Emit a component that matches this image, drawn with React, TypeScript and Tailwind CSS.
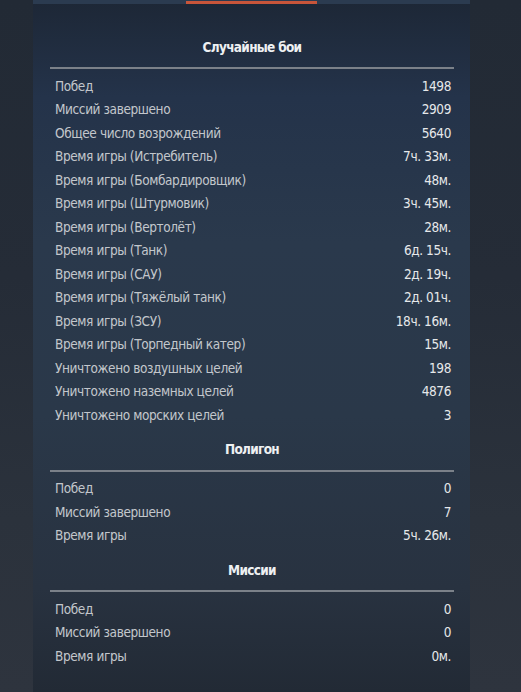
import React from "react";

type Row = [string, string];

const sections: { title: string; rows: Row[] }[] = [
  {
    title: "Случайные бои",
    rows: [
      ["Побед", "1498"],
      ["Миссий завершено", "2909"],
      ["Общее число возрождений", "5640"],
      ["Время игры (Истребитель)", "7ч. 33м."],
      ["Время игры (Бомбардировщик)", "48м."],
      ["Время игры (Штурмовик)", "3ч. 45м."],
      ["Время игры (Вертолёт)", "28м."],
      ["Время игры (Танк)", "6д. 15ч."],
      ["Время игры (САУ)", "2д. 19ч."],
      ["Время игры (Тяжёлый танк)", "2д. 01ч."],
      ["Время игры (ЗСУ)", "18ч. 16м."],
      ["Время игры (Торпедный катер)", "15м."],
      ["Уничтожено воздушных целей", "198"],
      ["Уничтожено наземных целей", "4876"],
      ["Уничтожено морских целей", "3"],
    ],
  },
  {
    title: "Полигон",
    rows: [
      ["Побед", "0"],
      ["Миссий завершено", "7"],
      ["Время игры", "5ч. 26м."],
    ],
  },
  {
    title: "Миссии",
    rows: [
      ["Побед", "0"],
      ["Миссий завершено", "0"],
      ["Время игры", "0м."],
    ],
  },
];

export default function App() {
  return (
    <div className="w-[521px] h-[692px] overflow-hidden flex bg-[linear-gradient(180deg,#222a35_0%,#252c37_40%,#2b323c_75%,#2e343e_100%)] font-['DejaVu_Sans_Condensed','DejaVu_Sans',sans-serif]">
      <div className="ml-[33px] w-[437px] h-full flex flex-col bg-[linear-gradient(180deg,#1d2736_0%,#24334a_14%,#2a394c_35%,#2a3849_60%,#283240_85%,#222a35_100%)]">
        <div className="h-[4px] flex bg-[#2b3b50]">
          <div className="ml-[153px] w-[131px] h-[3px] mt-[1px] bg-[#c8553a]" />
        </div>
        <div className="pl-[17px] pr-[16px] pt-[31px] flex flex-col">
          {sections.map((s, i) => (
            <div key={s.title} className={i > 0 ? "mt-[11px]" : ""}>
              <div className="h-[24px] flex items-center justify-center text-[13.5px] font-bold tracking-[-0.7px] text-[#eef0f2]">
                {s.title}
              </div>
              <div className="mt-[8px] h-[2px] bg-[#7b8189]" />
              <div className="mt-[5px] flex flex-col">
                {s.rows.map(([k, v], j) => (
                  <div
                    key={j}
                    className="h-[23.5px] flex items-center justify-between pl-[5px] pr-[3px] text-[13.5px] tracking-[-0.4px]"
                  >
                    <span className="text-[#c3c7cc]">{k}</span>
                    <span className="text-[#e6e8ea]">{v}</span>
                  </div>
                ))}
              </div>
            </div>
          ))}
        </div>
      </div>
    </div>
  );
}
